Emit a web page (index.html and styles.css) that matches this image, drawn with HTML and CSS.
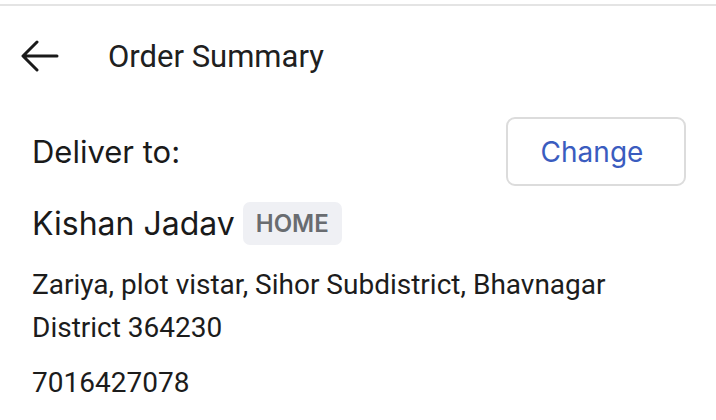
FILE: index.html
```html
<!DOCTYPE html>
<html>
<head>
<meta charset="utf-8">
<link rel="stylesheet" href="styles.css">
</head>
<body>
<div class="screen">
  <header class="header">
    <svg class="back" width="38" height="32" viewBox="0 0 38 32" aria-hidden="true">
      <path d="M36 16 H3 M16 2 L2 16 L16 30" fill="none" stroke="#1a1a1a" stroke-width="3" stroke-linecap="round" stroke-linejoin="round"/>
    </svg>
    <h1 class="title">Order Summary</h1>
  </header>
  <section class="delivery">
    <div class="deliver-row">
      <span class="deliver-label">Deliver to:</span>
      <button class="change-btn">Change</button>
    </div>
    <div class="name-row">
      <span class="name">Kishan Jadav</span>
      <span class="badge">HOME</span>
    </div>
    <p class="address">Zariya, plot vistar, Sihor Subdistrict, Bhavnagar District 364230</p>
    <p class="phone">7016427078</p>
  </section>
</div>
</body>
</html>
```

FILE: styles.css
```css
html, body {
  margin: 0;
  padding: 0;
  background: #ffffff;
}

body {
  font-family: Roboto, "Noto Sans", sans-serif;
  color: #1c1c1c;
}

.screen {
  padding-top: 4px;
  width: 716px;
  height: 420px;
  box-sizing: border-box;
  overflow: hidden;
}

.header {
  border-top: 2px solid #e4e4e4;
  height: 100px;
  display: flex;
  align-items: center;
  padding-left: 21px;
}

.back {
  display: block;
  flex: none;
}

.title {
  margin: 0 0 0 49px;
  font-size: 31px;
  font-weight: 400;
  color: #202020;
}

.delivery {
  padding: 0 30px 0 32px;
}

.deliver-row {
  display: flex;
  justify-content: space-between;
  align-items: center;
  margin-top: 11px;
}

.deliver-label {
  font-family: Inter, Roboto, sans-serif;
  font-size: 31px;
  color: #1a1a1a;
}

.change-btn {
  width: 180px;
  height: 69px;
  border: 2px solid #dcdcdc;
  border-radius: 9px;
  background: #ffffff;
  font-family: Inter, Roboto, sans-serif;
  font-size: 28px;
  color: #3a5cbf;
  padding: 0 8px 0 0;
}

.name-row {
  display: flex;
  align-items: center;
  margin-top: 16px;
}

.name {
  font-family: Inter, Roboto, sans-serif;
  font-size: 32px;
  color: #1a1a1a;
}

.badge {
  margin-left: 8px;
  background: #eff0f4;
  border-radius: 7px;
  height: 43px;
  padding: 0 13px;
  display: flex;
  align-items: center;
  font-family: Inter, Roboto, sans-serif;
  font-weight: 600;
  font-size: 24px;
  color: #696c70;
}

.address {
  margin: 18px 0 0 0;
  font-size: 28px;
  line-height: 43px;
  width: 600px;
}

.phone {
  margin: 12px 0 0 0;
  font-size: 28px;
  line-height: 43px;
}
```
